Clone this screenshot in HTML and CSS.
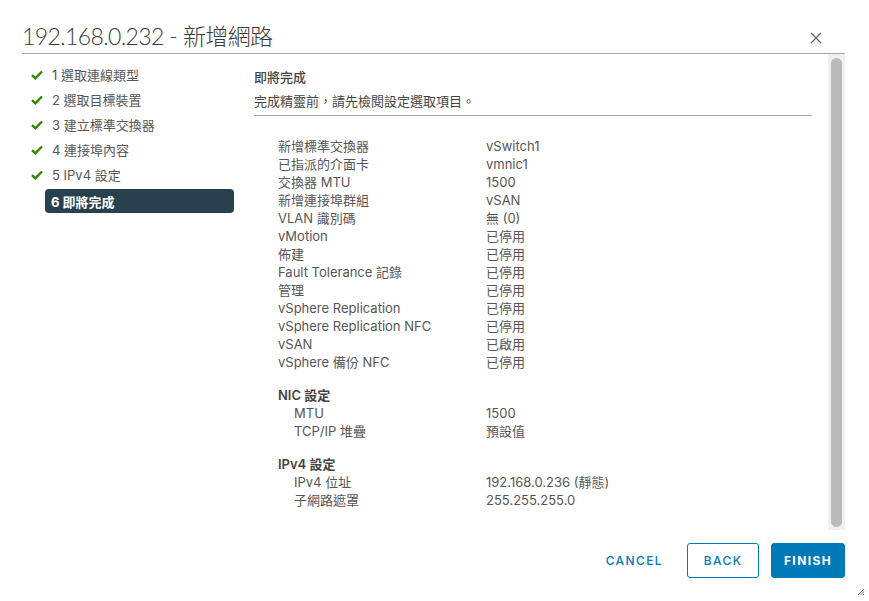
FILE: index.html
```html
<!DOCTYPE html>
<html lang="zh-Hant">
<head>
<meta charset="utf-8">
<title>新增網路</title>
<link rel="stylesheet" href="styles.css">
</head>
<body>
<div class="modal">
  <div class="header">
    <h1 class="title">192.168.0.232 - 新增網路</h1>
    <button class="close" aria-label="close">
      <svg width="12" height="12" viewBox="0 0 12 12"><path d="M1 1L11 11M11 1L1 11" stroke="#666" stroke-width="1.3" fill="none"/></svg>
    </button>
  </div>
  <div class="body">
    <nav class="steps">
      <div class="step done"><svg class="check" width="12" height="10" viewBox="0 0 12 10"><path d="M1 5.2L4.3 8.3L11 1.5" stroke="#318700" stroke-width="2.4" fill="none"/></svg><span>1 選取連線類型</span></div>
      <div class="step done"><svg class="check" width="12" height="10" viewBox="0 0 12 10"><path d="M1 5.2L4.3 8.3L11 1.5" stroke="#318700" stroke-width="2.4" fill="none"/></svg><span>2 選取目標裝置</span></div>
      <div class="step done"><svg class="check" width="12" height="10" viewBox="0 0 12 10"><path d="M1 5.2L4.3 8.3L11 1.5" stroke="#318700" stroke-width="2.4" fill="none"/></svg><span>3 建立標準交換器</span></div>
      <div class="step done"><svg class="check" width="12" height="10" viewBox="0 0 12 10"><path d="M1 5.2L4.3 8.3L11 1.5" stroke="#318700" stroke-width="2.4" fill="none"/></svg><span>4 連接埠內容</span></div>
      <div class="step done"><svg class="check" width="12" height="10" viewBox="0 0 12 10"><path d="M1 5.2L4.3 8.3L11 1.5" stroke="#318700" stroke-width="2.4" fill="none"/></svg><span>5 IPv4 設定</span></div>
      <div class="step active"><span>6 即將完成</span></div>
    </nav>
    <main class="content">
      <div class="page-title">即將完成</div>
      <div class="page-desc">完成精靈前，請先檢閱設定選取項目。</div>
      <div class="summary">
        <div class="row"><span class="k">新增標準交換器</span><span class="v">vSwitch1</span></div>
        <div class="row"><span class="k">已指派的介面卡</span><span class="v">vmnic1</span></div>
        <div class="row"><span class="k">交換器 MTU</span><span class="v">1500</span></div>
        <div class="row"><span class="k">新增連接埠群組</span><span class="v">vSAN</span></div>
        <div class="row"><span class="k">VLAN 識別碼</span><span class="v">無 (0)</span></div>
        <div class="row"><span class="k">vMotion</span><span class="v">已停用</span></div>
        <div class="row"><span class="k">佈建</span><span class="v">已停用</span></div>
        <div class="row"><span class="k">Fault Tolerance 記錄</span><span class="v">已停用</span></div>
        <div class="row"><span class="k">管理</span><span class="v">已停用</span></div>
        <div class="row"><span class="k">vSphere Replication</span><span class="v">已停用</span></div>
        <div class="row"><span class="k">vSphere Replication NFC</span><span class="v">已停用</span></div>
        <div class="row"><span class="k">vSAN</span><span class="v">已啟用</span></div>
        <div class="row"><span class="k">vSphere 備份 NFC</span><span class="v">已停用</span></div>
      </div>
      <div class="group">
        <div class="group-title">NIC 設定</div>
        <div class="row sub"><span class="k">MTU</span><span class="v">1500</span></div>
        <div class="row sub"><span class="k">TCP/IP 堆疊</span><span class="v">預設值</span></div>
      </div>
      <div class="group">
        <div class="group-title">IPv4 設定</div>
        <div class="row sub"><span class="k">IPv4 位址</span><span class="v">192.168.0.236 (靜態)</span></div>
        <div class="row sub"><span class="k">子網路遮罩</span><span class="v">255.255.255.0</span></div>
      </div>
    </main>
    <div class="scrollbar"><div class="thumb"></div></div>
  </div>
  <div class="footer">
    <button class="btn link">CANCEL</button>
    <button class="btn outline">BACK</button>
    <button class="btn primary">FINISH</button>
  </div>
  <svg class="resize" width="8" height="8" viewBox="0 0 8 8"><path d="M7 1L1 7M7 3.5L3.5 7M7 6L6 7" stroke="#777" stroke-width="1"/></svg>
</div>
</body>
</html>
```

FILE: styles.css
```css
* { box-sizing: border-box; }
html, body { margin: 0; padding: 0; background: #fff; }
body {
  font-family: Inter, "Noto Sans CJK TC", sans-serif;
  color: #565656;
  width: 869px;
  height: 601px;
  overflow: hidden;
}
.modal {
  position: relative;
  width: 869px;
  height: 601px;
  padding: 0 24px 0 22px;
  display: flex;
  flex-direction: column;
}
.header {
  height: 54px;
  border-bottom: 1px solid #a8a8a8;
  display: flex;
  align-items: flex-end;
  justify-content: space-between;
  padding-bottom: 1px;
}
.title {
  margin: 0;
  font-family: Lato, "Noto Sans CJK TC", sans-serif;
  font-size: 23px;
  font-weight: 300;
  color: #3a3a3a;
  line-height: 32px;
  letter-spacing: -0.6px;
}
.close {
  border: 0;
  background: none;
  padding: 0;
  margin: 0 23px 8px 0;
  width: 12px;
  height: 12px;
  display: flex;
}
.body {
  display: flex;
  height: 476px;
}
.steps {
  width: 232px;
  padding-top: 8px;
  display: flex;
  flex-direction: column;
}
.step {
  height: 25px;
  display: flex;
  align-items: center;
  font-size: 13px;
  color: #565656;
}
.check { margin: 0 9px 0 9px; flex: none; }
.step.active {
  margin-left: 23px;
  margin-top: 2px;
  width: 189px;
  height: 24px;
  background: #29414e;
  color: #fff;
  font-weight: 700;
  border-radius: 4px;
  padding-left: 6px;
}
.content {
  width: 558px;
  padding-top: 14px;
}
.page-title {
  font-size: 13px;
  font-weight: 500;
  color: #444;
  line-height: 18px;
}
.page-desc {
  font-size: 13px;
  line-height: 18px;
  margin-top: 6px;
  padding-bottom: 5px;
  border-bottom: 1px solid #a8a8a8;
  color: #444;
}
.summary { padding-top: 21px; padding-left: 24px; }
.row {
  display: flex;
  font-size: 13px;
  line-height: 18px;
  color: #565656;
}
.row .k { width: 208px; flex: none; }
.group { padding-left: 24px; margin-top: 15px; }
.group-title {
  font-size: 13px;
  font-weight: 600;
  color: #444;
  line-height: 18px;
}
.group .row.sub .k { width: 208px; padding-left: 16px; }
.scrollbar {
  margin-left: 16px;
  width: 17px;
  background: #f0f0f0;
  padding: 4px 3px 3px 3px;
}
.thumb {
  height: 100%;
  background: #bababa;
  border-radius: 6px;
}
.footer {
  display: flex;
  justify-content: flex-end;
  align-items: center;
  gap: 12px;
  padding-top: 13px;
}
.btn {
  height: 35px;
  font-family: Inter, sans-serif;
  font-size: 12px;
  font-weight: 500;
  letter-spacing: 1.4px;
  border-radius: 3px;
  padding: 0 10px;
  cursor: pointer;
}
.btn.link {
  border: 0;
  background: none;
  color: #0079b8;
  margin-right: 2px;
}
.btn.outline {
  width: 72px;
  border: 1px solid #0079b8;
  background: #fff;
  color: #0079b8;
}
.btn.primary {
  width: 74px;
  border: 1px solid #0079b8;
  background: #0079b8;
  color: #fff;
  font-weight: 700;
}
.resize {
  position: absolute;
  right: 4px;
  bottom: 5px;
}
```
